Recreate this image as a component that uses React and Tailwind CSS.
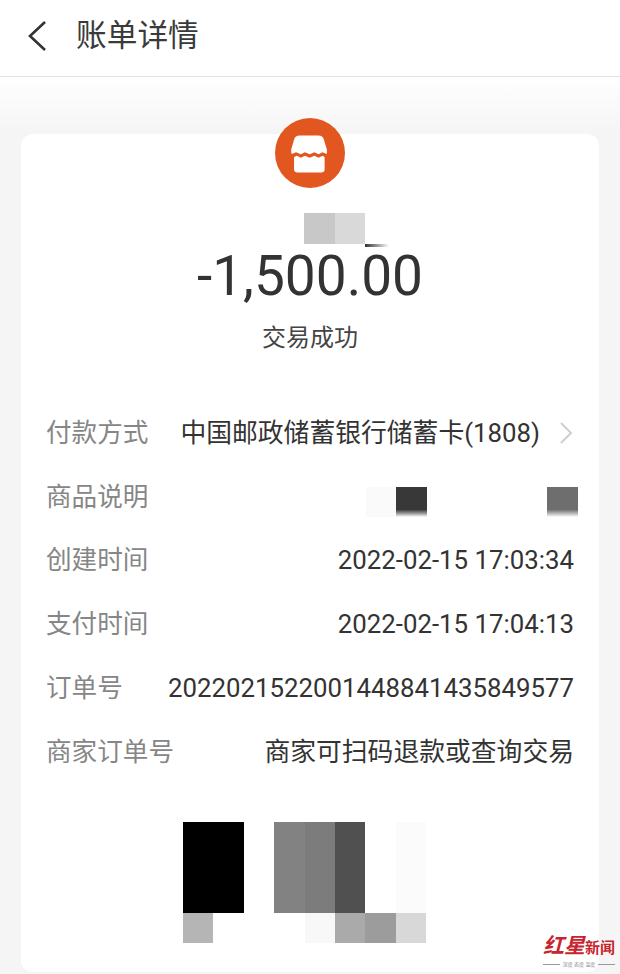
const CJK = '[font-family:Roboto,"Noto_Sans_CJK_SC",sans-serif]'

const rows = [
  { label: '创建时间', value: '2022-02-15 17:03:34' },
  { label: '支付时间', value: '2022-02-15 17:04:13' },
  { label: '订单号', value: '2022021522001448841435849577' },
  { label: '商家订单号', value: '商家可扫码退款或查询交易' },
]

function StoreIcon() {
  return (
    <svg className="mt-[2px] mr-[2px]" width="38" height="38" viewBox="4 1.5 28 32" preserveAspectRatio="none" fill="#fff">
      <path d="M7 5.5 C7.5 3 9 2 11 2 H25 C27 2 28.5 3 29 5.5 L31 13 C31.4 15 31.2 16.5 31 17.5 L28 16 L25 17.8 L22 16 L18.5 17.8 L15 16 L12 17.8 L8.5 16 L5.3 17.5 C4.9 16.5 4.7 15 5 13 Z" />
      <path d="M7 20 L9 19 L12 20.6 L15 19 L18.5 20.6 L22 19 L25 20.6 L28 19 L29.5 20 V30.5 C29.5 32 28.5 33 27 33 H9.5 C8 33 7 32 7 30.5 Z" />
    </svg>
  )
}

function Row({ label, children }) {
  return (
    <div className="flex h-[63.8px] items-center justify-between">
      <span className="shrink-0 text-[25.6px] text-[#868686]">{label}</span>
      {children}
    </div>
  )
}

function Watermark() {
  return (
    <div className="absolute bottom-[6px] right-[5px] flex w-[72px] flex-col items-center">
      <div className="flex items-baseline whitespace-nowrap font-bold leading-[26px] text-[#c8242c]">
        <span className="text-[21px] italic">红星</span>
        <span className="text-[15px]">新闻</span>
      </div>
      <div className="flex w-full items-center gap-[3px]">
        <span className="h-px flex-1 bg-[#999]" />
        <span className="whitespace-nowrap text-[5px] leading-[7px] text-[#888]">深度 态度 温度</span>
        <span className="h-px flex-1 bg-[#999]" />
      </div>
    </div>
  )
}

export default function App() {
  return (
    <div className={`relative h-[974px] w-[620px] overflow-hidden bg-[#f5f5f5] ${CJK}`}>
      <header className="flex h-[77px] items-center gap-[25px] border-b border-[#e2e2e2] bg-white pb-[4px] pl-[27px]">
        <svg width="24" height="34" viewBox="0 0 24 34" fill="none" stroke="#333" strokeWidth="2.6">
          <path d="M18 3 L3 17 L18 31" />
        </svg>
        <h1 className="text-[30.7px] leading-none text-[#3a3a3a]">账单详情</h1>
      </header>

      <div className="bg-gradient-to-b from-white to-[#f5f5f5] to-[57px] px-[21px] pt-[57px]">
        <div className="flex h-[838px] flex-col rounded-[12px] bg-white">
          <div className="-mt-[16px] flex h-[70px] w-[70px] items-center justify-center self-center rounded-full bg-[#e2561f]">
            <StoreIcon />
          </div>

          <div className="mt-[25px] ml-[283px] flex h-[34px]">
            <span className="h-[31px] w-[31px] bg-[#c8c8c8]" />
            <span className="h-[31px] w-[30px] bg-[#d9d9d9]" />
            <span className="mt-[31px] h-[3px] w-[24px] bg-gradient-to-r from-[#333] to-transparent" />
          </div>

          <div className="h-[58px] text-center text-[55px] leading-[58px] text-[#333]">-1,500.00</div>
          <div className="mt-[15px] text-center text-[24px] leading-[36px] text-[#444]">交易成功</div>

          <div className="mt-[45px] pl-[25px] pr-[25px]">
            <Row label="付款方式">
              <div className="flex items-center">
                <span className="whitespace-nowrap text-[25.8px] text-[#333]">中国邮政储蓄银行储蓄卡(1808)</span>
                <svg className="ml-[19px] mr-[1px]" width="14" height="24" viewBox="0 0 14 24" fill="none" stroke="#cfcfcf" strokeWidth="2">
                  <path d="M2 2 L12 12 L2 22" />
                </svg>
              </div>
            </Row>
            <Row label="商品说明">
              <div className="mr-[-4px] mt-[10px] flex w-[212px] justify-between self-center">
                <div className="flex">
                  <span className="h-[30px] w-[30px] bg-[#fafafa]" />
                  <span className="h-[30px] w-[31px] bg-gradient-to-b from-[#383838] from-75% to-white" />
                </div>
                <span className="h-[30px] w-[31px] bg-gradient-to-b from-[#6e6e6e] from-75% to-white" />
              </div>
            </Row>
            {rows.map((row) => (
              <Row key={row.label} label={row.label}>
                <span className="whitespace-nowrap text-[25.8px] text-[#333]">{row.value}</span>
              </Row>
            ))}
          </div>

          {/* blurred QR code */}
          <div className="mt-[38px] ml-[162px] grid w-[243px] grid-cols-8 grid-rows-[91px_30px]">
            <div className="col-span-2 bg-black" />
            <div />
            <div className="bg-[#828282]" />
            <div className="bg-[#7c7c7c]" />
            <div className="bg-[#505050]" />
            <div />
            <div className="bg-[#fbfbfb]" />
            <div className="bg-[#b5b5b5]" />
            <div className="col-span-3" />
            <div className="bg-[#f8f8f8]" />
            <div className="bg-[#aaaaaa]" />
            <div className="bg-[#9c9c9c]" />
            <div className="bg-[#d8d8d8]" />
          </div>
        </div>
      </div>

      <Watermark />
    </div>
  )
}
